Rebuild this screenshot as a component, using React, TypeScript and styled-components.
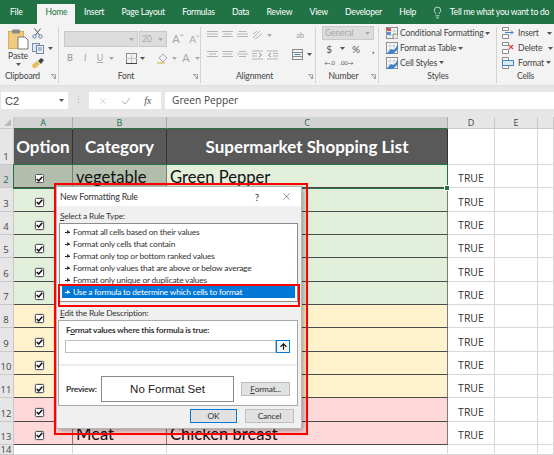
import React from 'react';
import styled, { createGlobalStyle } from 'styled-components';
import { ArrowUp, Lightbulb, X } from 'lucide-react';

const ui = 'Lato, "Open Sans", sans-serif';
const sheet = 'Lato, "Open Sans", sans-serif';

const Global = createGlobalStyle`
  html, body { margin: 0; padding: 0; background: #fff; }
  body { font-family: ${ui}; }
`;

// small ribbon drawings
const Caret = ({ c = '#555' }: { c?: string }) => (
  <svg width="5" height="3" viewBox="0 0 5 3"><path d="M0 0h5L2.5 3z" fill={c} /></svg>
);

const PasteIcon = () => (
  <svg width="21" height="21" viewBox="0 0 21 21">
    <rect x="0.5" y="2.5" width="15" height="17" fill="#eecb7e" stroke="#d9ad58" />
    <rect x="4" y="0.5" width="8" height="4" rx="1" fill="#8a8a8a" />
    <path d="M10 8h7l3 3v9H10z" fill="#fff" stroke="#777" />
  </svg>
);
const ScissorsIcon = () => (
  <svg width="11" height="11" viewBox="0 0 11 11" fill="none" stroke="#5a7ea8" strokeWidth="1">
    <circle cx="2.5" cy="8.5" r="1.7" />
    <circle cx="8.5" cy="8.5" r="1.7" />
    <path d="M3.5 7 8.5 0.5M7.5 7 2.5 0.5" stroke="#555" />
  </svg>
);
const CopyIcon = () => (
  <svg width="12" height="11" viewBox="0 0 12 11">
    <rect x="0.5" y="0.5" width="7" height="8" fill="#dfe8f2" stroke="#7c93ad" />
    <rect x="4.5" y="2.5" width="7" height="8" fill="#eef3f8" stroke="#6d87a5" />
    <path d="M6 5h4M6 7h4" stroke="#6d87a5" />
  </svg>
);
const BrushIcon = () => (
  <svg width="12" height="10" viewBox="0 0 12 10">
    <path d="M0 7 5 3l3 3-4 4H1z" fill="#e8bd62" />
    <path d="M6 3l3-3 3 2-3 4z" fill="#444" />
  </svg>
);
const Lines = ({ widths }: { widths: number[] }) => (
  <svg width="11" height="10" viewBox="0 0 11 10" stroke="#b5b5b5">
    {widths.map((w, i) => (
      <path key={i} d={`M${(11 - w) / 2} ${1.5 + i * 2.5}h${w}`} />
    ))}
  </svg>
);
const OrientIcon = () => (
  <svg width="11" height="10" viewBox="0 0 11 10" fill="none" stroke="#b5b5b5">
    <path d="M1 8 8 1M3 9l7-5M1 4l4-3" />
  </svg>
);
const IndentIcon = ({ flip }: { flip?: boolean }) => (
  <svg width="11" height="10" viewBox="0 0 11 10" stroke="#b5b5b5" fill="none" style={flip ? { transform: 'scaleX(-1)' } : undefined}>
    <path d="M0 1h11M6 3.5h5M6 6h5M0 9h11" />
    <path d="M4 3 1.5 5 4 7" stroke="#8b8b8b" />
  </svg>
);
const BorderIcon = () => (
  <svg width="11" height="11" viewBox="0 0 11 11" fill="none" stroke="#8a8a8a">
    <rect x="0.5" y="0.5" width="10" height="10" />
    <path d="M5.5 0v11M0 5.5h11" stroke="#c4c4c4" />
    <path d="M0 10.5h11" stroke="#444" />
  </svg>
);
const FillIcon = () => (
  <svg width="12" height="12" viewBox="0 0 12 12" fill="none" stroke="#a8a8a8">
    <path d="M2 6 6 2l4 4-4 4z" />
    <path d="M0 11h8" stroke="#e2cf9a" strokeWidth="2" />
  </svg>
);
const MergeIcon = () => (
  <svg width="11" height="11" viewBox="0 0 11 11" fill="none" stroke="#8a8a8a">
    <rect x="0.5" y="0.5" width="10" height="10" />
    <path d="M0 3.5h11M0 7.5h11" />
    <path d="M2.5 5.5h6" stroke="#4d86c6" />
  </svg>
);
const RuleTableIcon = ({ tone }: { tone: 'cond' | 'table' | 'styles' }) => (
  <svg width="12" height="12" viewBox="0 0 12 12">
    <rect x="0.5" y="0.5" width="11" height="11" fill="#fff" stroke="#8a8a8a" />
    <path d="M0 4h12M0 8h12M4 0v12M8 0v12" stroke="#b8b8b8" strokeWidth="0.7" />
    {tone === 'cond' && <path d="M1 1h4v3H1z" fill="#d9534a" />}
    {tone === 'cond' && <path d="M1 5h4v3H1z" fill="#5b8fd0" />}
    {tone === 'cond' && <path d="M7 7h5v5H7z" fill="#e9e9e9" stroke="#666" strokeWidth="0.7" />}
    {tone !== 'cond' && <path d="M0 12 5 7l3 1 4-5v4L7 12z" fill="#3d83c8" />}
  </svg>
);
const CellsIcon = ({ kind }: { kind: 'insert' | 'delete' | 'format' }) => (
  <svg width="12" height="12" viewBox="0 0 12 12" fill="none">
    <path d="M0.5 0.5h6v3h-6zM0.5 7.5h6v4h-6z" stroke="#8a8a8a" fill="#fff" />
    {kind === 'insert' && <path d="M3 5.5h8M9 3.5l2 2-2 2" stroke="#3d83c8" />}
    {kind === 'delete' && <path d="M7 3l4 4M11 3 7 7" stroke="#d9443a" strokeWidth="1.2" />}
    {kind === 'format' && <path d="M0.5 3.5h11v5h-11z" stroke="#3d83c8" fill="#dce8f4" />}
  </svg>
);
const CheckIcon = () => (
  <svg width="7" height="6" viewBox="0 0 7 6" fill="none" stroke="#111" strokeWidth="1.5">
    <path d="M0.7 3 2.7 5 6.3 0.8" />
  </svg>
);
const Launcher = () => (
  <svg width="5" height="5" viewBox="0 0 5 5" fill="none" stroke="#8d8d8d" strokeWidth="0.8">
    <path d="M0 .4h4.6V5M1 1l3 3M2.5 4.2H4.2V2.5" />
  </svg>
);

// page
const Page = styled.div`
  position: relative;
  width: 554px;
  height: 455px;
  overflow: hidden;
  display: flex;
  flex-direction: column;
  background: #e6e6e6;
`;

const TabBar = styled.nav`
  height: 24px;
  flex: none;
  background: #217346;
  display: flex;
  align-items: stretch;
  font-size: 8.6px;
  letter-spacing: -0.25px;
  color: #fff;
  white-space: nowrap;
`;
const Tab = styled.div<{ $active?: boolean; $lead?: boolean }>`
  display: flex;
  align-items: center;
  padding: 0 ${p => (p.$active ? 8 : 8.7)}px;
  ${p => p.$lead && 'padding: 0 15px 0 10px;'}
  ${p => p.$active && 'background: #f3f3f3; color: #217346; margin: 4px 0 0; padding-bottom: 4px;'}
`;
const TellMe = styled.div`
  display: flex;
  align-items: center;
  gap: 6px;
  margin-left: 6px;
`;

const Ribbon = styled.div`
  height: 61px;
  flex: none;
  background: #f3f3f3;
  display: flex;
  font-size: 8.6px;
  letter-spacing: -0.15px;
  color: #444;
`;
const Group = styled.section<{ $w: number; $edge?: boolean }>`
  position: relative;
  width: ${p => p.$w}px;
  flex: none;
  display: flex;
  flex-direction: column;
  &::after {
    content: '';
    position: absolute;
    right: 0;
    top: 3px;
    bottom: 2px;
    width: ${p => (p.$edge ? 0 : 1)}px;
    background: #d4d4d4;
  }
`;
const GroupBody = styled.div`
  flex: 1;
  min-height: 0;
  display: flex;
`;
const GroupLabel = styled.div<{ $inset?: number }>`
  position: relative;
  height: 15px;
  flex: none;
  box-sizing: border-box;
  padding-right: ${p => p.$inset ?? 0}px;
  line-height: 13px;
  text-align: center;
  color: #444;
  white-space: nowrap;
`;
const LauncherSlot = styled.span`
  position: absolute;
  right: 3px;
  top: 4px;
  display: flex;
`;
const PasteCol = styled.div`
  width: 30px;
  margin-left: 3px;
  display: flex;
  flex-direction: column;
  align-items: center;
  padding-top: 5px;
  line-height: 11px;
  gap: 1px;
`;
const ClipCol = styled.div`
  display: flex;
  flex-direction: column;
  gap: 4px;
  padding-top: 4px;
  margin-left: -1px;
`;
const Stack = styled.div<{ $gap?: number; $top?: number; $left?: number }>`
  display: flex;
  flex-direction: column;
  gap: ${p => p.$gap ?? 4}px;
  padding-top: ${p => p.$top ?? 4}px;
  padding-left: ${p => p.$left ?? 0}px;
`;
const Row = styled.div<{ $gap?: number; $h?: number; $pad?: number }>`
  display: flex;
  align-items: center;
  gap: ${p => p.$gap ?? 3}px;
  height: ${p => (p.$h ? `${p.$h}px` : 'auto')};
  padding-left: ${p => p.$pad ?? 0}px;
`;
const Combo = styled.div<{ $w: number; $h?: number }>`
  width: ${p => p.$w}px;
  height: ${p => p.$h ?? 15}px;
  box-sizing: border-box;
  border: 1px solid #c9c9c9;
  background: #dcdcdc;
  color: #aaa;
  display: flex;
  align-items: center;
  justify-content: space-between;
  padding: 0 3px 0 2px;
`;
const Glyph = styled.span<{ $w?: number; $dark?: boolean; $bold?: boolean; $size?: number }>`
  width: ${p => p.$w ?? 12}px;
  text-align: center;
  color: ${p => (p.$dark ? '#555' : '#a5a5a5')};
  font-weight: ${p => (p.$bold ? 700 : 400)};
  font-size: ${p => p.$size ?? 9}px;
  line-height: 12px;
  flex: none;
`;
const Spacer = styled.span<{ $w: number }>`
  width: ${p => p.$w}px;
  flex: none;
`;
const StyleRow = styled.div`
  display: flex;
  align-items: center;
  gap: 2px;
  height: 15px;
  white-space: nowrap;
`;

const Shadow = styled.div`
  height: 6px;
  flex: none;
  box-sizing: border-box;
  background: #e6e6e6;
  border-top: 1px solid #dedede;
`;
const FormulaBar = styled.div`
  height: 19px;
  flex: none;
  display: flex;
  align-items: stretch;
  background: #e6e6e6;
  padding: 1px 0;
  box-sizing: border-box;
  font-size: 11px;
  color: #444;
`;
const NameBox = styled.div`
  width: 67px;
  margin-left: 1px;
  background: #fff;
  display: flex;
  align-items: center;
  justify-content: space-between;
  padding: 0 4px;
  box-sizing: border-box;
  font-family: "Liberation Sans", sans-serif;
`;
const Grip = styled.div`
  width: 21px;
  text-align: center;
  color: #aaa;
  font-size: 9px;
  line-height: 15px;
`;
const FxBox = styled.div`
  width: 72px;
  background: #fff;
  display: flex;
  align-items: center;
  justify-content: space-around;
  color: #b0b0b0;
  font-size: 10px;
  padding: 0 3px;
  box-sizing: border-box;
`;
const FxLabel = styled.i`
  font-family: "Liberation Serif", serif;
  color: #555;
`;
const FormulaInput = styled.div`
  flex: 1;
  margin-left: 4px;
  background: #fff;
  padding-left: 7px;
  line-height: 17px;
  font-family: "Open Sans", sans-serif;
  font-size: 10.2px;
`;
const Gap = styled.div`
  height: 7px;
  flex: none;
  background: #e6e6e6;
`;

// sheet
const Sheet = styled.div`
  position: relative;
  flex: 1;
  min-height: 0;
  background: #fff;
  display: grid;
  grid-template-columns: 14px 59px 94px 281px 47px 43px 16px;
  grid-template-rows: 12px 36px repeat(12, 23.33px) 1fr;
  font-family: ${sheet};
`;
const Corner = styled.div`
  background: #e6e6e6;
  border-right: 1px solid #c8c8c8;
  border-bottom: 1px solid #c8c8c8;
  display: flex;
  align-items: flex-end;
  justify-content: flex-end;
  &::after {
    content: '';
    border-style: solid;
    border-width: 0 0 7px 7px;
    border-color: transparent transparent #b9b9b9 transparent;
    margin: 0 2px 2px 0;
  }
`;
const ColHead = styled.div<{ $sel?: boolean }>`
  background: ${p => (p.$sel ? '#d2d2d2' : '#e6e6e6')};
  color: ${p => (p.$sel ? '#217346' : '#444')};
  border-right: 1px solid ${p => (p.$sel ? '#ababab' : '#c8c8c8')};
  border-bottom: 1px solid ${p => (p.$sel ? '#217346' : '#c8c8c8')};
  font: 9px/11px "Open Sans", sans-serif;
  text-align: center;
  box-sizing: border-box;
`;
const RowHead = styled.div<{ $sel?: boolean; $cut?: boolean }>`
  background: ${p => (p.$sel ? '#d2d2d2' : '#e6e6e6')};
  color: ${p => (p.$sel ? '#217346' : '#444')};
  border-right: 1px solid ${p => (p.$sel ? '#217346' : '#c8c8c8')};
  border-bottom: 1px solid #c8c8c8;
  font: 9.5px/${p => (p.$cut ? 10 : 12)}px "Open Sans", sans-serif;
  display: flex;
  align-items: ${p => (p.$cut ? 'flex-start' : 'flex-end')};
  justify-content: center;
  padding: 0 1px ${p => (p.$cut ? 0 : 1)}px 0;
  box-sizing: border-box;
  overflow: hidden;
`;
const HeadCell = styled.div`
  background: #595959;
  color: #fff;
  font-weight: 700;
  font-size: 17px;
  display: flex;
  align-items: center;
  justify-content: center;
  border-right: 1px solid #333;
  border-bottom: 1px solid #333;
  box-sizing: border-box;
  white-space: nowrap;
  overflow: hidden;
`;
const tones: Record<string, string> = { green: '#e2efda', yellow: '#fff2cc', red: '#ffd9d9' };
const DataCell = styled.div<{ $tone: string; $sel?: boolean }>`
  background: ${p => (p.$sel ? '#b3bdab' : tones[p.$tone])};
  color: #111;
  font-size: 16.6px;
  line-height: 20px;
  border-right: 1px solid #7b7b7b;
  border-bottom: 1px solid #4a4a4a;
  box-sizing: border-box;
  padding-left: 3px;
  display: flex;
  align-items: flex-end;
  white-space: nowrap;
  overflow: hidden;
`;
const CheckCell = styled(DataCell)`
  align-items: flex-end;
  justify-content: center;
  padding: 0 8px 4px 0;
`;
const CheckBox = styled.span`
  width: 9px;
  height: 9px;
  box-sizing: border-box;
  border: 1px solid #555;
  border-radius: 1.5px;
  background: #fff;
  display: flex;
  align-items: center;
  justify-content: center;
  box-shadow: 0 0 0 0.5px #bbb;
`;
const PlainCell = styled.div`
  border-right: 1px solid #d8d8d8;
  border-bottom: 1px solid #d8d8d8;
  box-sizing: border-box;
  font-family: "Open Sans", sans-serif;
  font-size: 10.5px;
  color: #333;
  display: flex;
  align-items: flex-end;
  justify-content: center;
  padding-bottom: 2px;
`;
const Selection = styled.div`
  position: absolute;
  left: 13px;
  top: 47px;
  width: 435px;
  height: 25px;
  box-sizing: border-box;
  border: 1.5px solid #217346;
  pointer-events: none;
  &::after {
    content: '';
    position: absolute;
    right: -3px;
    bottom: -3px;
    width: 4px;
    height: 4px;
    background: #217346;
    border: 0.5px solid #fff;
  }
`;

// dialog
const Dialog = styled.div`
  position: absolute;
  left: 56px;
  top: 186px;
  width: 246px;
  height: 243px;
  box-sizing: border-box;
  background: #f0f0f0;
  box-shadow: 2px 2px 6px rgba(0, 0, 0, 0.35);
  border: 1px solid #b5b5b5;
  font-size: 8.4px;
  letter-spacing: -0.2px;
  color: #333;
  display: flex;
  flex-direction: column;
`;
const TitleBar = styled.div`
  height: 19px;
  background: #fff;
  display: flex;
  align-items: center;
  padding: 0 9px 0 3px;
  flex: none;
  font-size: 8.8px;
`;
const Title = styled.div`
  flex: 1;
`;
const TitleBtn = styled.span`
  margin-right: 22px;
  font-size: 10px;
`;
const SectionLabel = styled.div<{ $top: number }>`
  margin: ${p => p.$top}px 0 0 3px;
  line-height: 11px;
  height: 11px;
  flex: none;
`;
const RuleList = styled.div`
  margin: 1px 3px 0 2px;
  height: 79px;
  box-sizing: border-box;
  border: 1px solid #8c8c8c;
  background: #fff;
  padding: 2px;
  flex: none;
`;
const RuleRow = styled.div<{ $sel?: boolean }>`
  height: 12px;
  line-height: 11px;
  padding-left: 3px;
  white-space: nowrap;
  display: flex;
  align-items: center;
  gap: 3px;
  background: ${p => (p.$sel ? '#0078d7' : 'transparent')};
  color: ${p => (p.$sel ? '#fff' : '#333')};
`;
const Bullet = styled.span`
  width: 5px;
  height: 0;
  border-top: 1px solid currentColor;
  position: relative;
  &::after {
    content: '';
    position: absolute;
    right: 0;
    top: -2.5px;
    border-left: 3px solid currentColor;
    border-top: 2px solid transparent;
    border-bottom: 2px solid transparent;
  }
`;
const DescBox = styled.div`
  margin: 1px 3px 0 1px;
  height: 86px;
  flex: none;
  box-sizing: border-box;
  border: 1px solid #a8a8a8;
  background: #fff;
  display: flex;
  flex-direction: column;
`;
const BoldLabel = styled.div`
  font-weight: 700;
  color: #333;
  margin: 4px 0 0 7px;
  line-height: 11px;
  height: 11px;
`;
const FormulaRow = styled.div`
  display: flex;
  margin: 4px 7px 0 6px;
  height: 13px;
`;
const FormulaField = styled.div`
  flex: 1;
  box-sizing: border-box;
  border: 1px solid #bdbdbd;
  background: #fff;
`;
const RefBtn = styled.div`
  width: 14px;
  box-sizing: border-box;
  border: 1px solid #0078d7;
  background: #f4f4f4;
  display: flex;
  align-items: center;
  justify-content: center;
`;
const Divider = styled.div`
  margin-top: 11px;
  height: 2px;
  background: #ececec;
`;
const PreviewRow = styled.div`
  display: flex;
  align-items: center;
  margin: 10px 7px 0 7px;
`;
const PreviewLabel = styled.div`
  width: 35px;
  font-weight: 700;
  flex: none;
`;
const PreviewBox = styled.div`
  width: 133px;
  height: 26px;
  flex: none;
  box-sizing: border-box;
  border: 1px solid #8a8a8a;
  display: flex;
  align-items: center;
  justify-content: center;
  font: 11.5px "Liberation Sans", sans-serif;
  letter-spacing: 0;
  color: #222;
`;
const DlgButton = styled.div<{ $w: number; $primary?: boolean }>`
  width: ${p => p.$w}px;
  height: 14px;
  box-sizing: border-box;
  border: 1px solid ${p => (p.$primary ? '#0078d7' : '#bfbfbf')};
  background: #e1e1e1;
  display: flex;
  align-items: center;
  justify-content: center;
  flex: none;
`;
const FormatBtn = styled(DlgButton)`
  margin-left: 7px;
`;
const Footer = styled.div`
  display: flex;
  justify-content: flex-end;
  gap: 8px;
  margin: 3px 7px 0 0;
`;

// annotations
const RedFrame = styled.div<{ $l: number; $t: number; $w: number; $h: number }>`
  position: absolute;
  left: ${p => p.$l}px;
  top: ${p => p.$t}px;
  width: ${p => p.$w}px;
  height: ${p => p.$h}px;
  box-sizing: border-box;
  border: 2px solid #ff0000;
  pointer-events: none;
`;

const tabs = ['Insert', 'Page Layout', 'Formulas', 'Data', 'Review', 'View', 'Developer', 'Help'];
const rows: { n: number; tone: string; b?: string; c?: string }[] = [
  { n: 2, tone: 'green', b: 'vegetable', c: 'Green Pepper' },
  { n: 3, tone: 'green' },
  { n: 4, tone: 'green' },
  { n: 5, tone: 'green' },
  { n: 6, tone: 'green' },
  { n: 7, tone: 'green' },
  { n: 8, tone: 'yellow' },
  { n: 9, tone: 'yellow' },
  { n: 10, tone: 'yellow' },
  { n: 11, tone: 'yellow' },
  { n: 12, tone: 'red' },
  { n: 13, tone: 'red', b: 'Meat', c: 'Chicken breast' },
];
const rules = [
  'Format all cells based on their values',
  'Format only cells that contain',
  'Format only top or bottom ranked values',
  'Format only values that are above or below average',
  'Format only unique or duplicate values',
];

const App = () => {
  return (
    <Page>
      <Global />
      <TabBar>
        <Tab $lead>File</Tab>
        <Tab $active>Home</Tab>
        {tabs.map(t => (
          <Tab key={t}>{t}</Tab>
        ))}
        <TellMe>
          <Lightbulb size={13} strokeWidth={1.3} />
          Tell me what you want to do
        </TellMe>
      </TabBar>

      <Ribbon>
        <Group $w={59}>
          <GroupBody>
            <PasteCol>
              <PasteIcon />
              <span>Paste</span>
              <Caret />
            </PasteCol>
            <ClipCol>
              <ScissorsIcon />
              <Row $gap={4}><CopyIcon /><Caret /></Row>
              <BrushIcon />
            </ClipCol>
          </GroupBody>
          <GroupLabel $inset={14}>Clipboard<LauncherSlot><Launcher /></LauncherSlot></GroupLabel>
        </Group>

        <Group $w={142}>
          <GroupBody>
            <Stack $top={7} $gap={5} $left={5}>
              <Row $gap={1}>
                <Combo $w={74} $h={16}><span /><Caret c="#aaa" /></Combo>
                <Combo $w={28} $h={16}>20<Caret c="#aaa" /></Combo>
                <Glyph $w={16} $size={11} style={{ marginLeft: 2 }}>Aˆ</Glyph>
                <Glyph $w={15} $size={10}>Aˇ</Glyph>
              </Row>
              <Row $gap={3}>
                <Glyph $bold>B</Glyph>
                <Glyph style={{ fontStyle: 'italic' }}>I</Glyph>
                <Glyph style={{ textDecoration: 'underline' }}>U</Glyph>
                <Caret c="#aaa" />
                <Spacer $w={6} />
                <BorderIcon />
                <Caret c="#555" />
                <Spacer $w={6} />
                <FillIcon />
                <Caret c="#aaa" />
                <Glyph $size={11}>A</Glyph>
                <Caret c="#aaa" />
              </Row>
            </Stack>
          </GroupBody>
          <GroupLabel $inset={8}>Font<LauncherSlot><Launcher /></LauncherSlot></GroupLabel>
        </Group>

        <Group $w={115}>
          <GroupBody>
            <Stack $top={5} $gap={8} $left={6}>
              <Row $gap={4}>
                <Lines widths={[11, 11, 11]} />
                <Lines widths={[11, 8, 11]} />
                <Lines widths={[8, 11, 11]} />
                <OrientIcon />
                <Caret c="#aaa" />
                <Spacer $w={13} />
                <Glyph $w={14} $size={8}>ab</Glyph>
              </Row>
              <Row $gap={4}>
                <Lines widths={[11, 7, 11]} />
                <Lines widths={[11, 9, 11]} />
                <Lines widths={[7, 11, 7]} />
                <IndentIcon flip />
                <IndentIcon />
                <Spacer $w={6} />
                <MergeIcon />
                <Caret />
              </Row>
            </Stack>
          </GroupBody>
          <GroupLabel $inset={8}>Alignment<LauncherSlot><Launcher /></LauncherSlot></GroupLabel>
        </Group>

        <Group $w={63}>
          <GroupBody>
            <Stack $top={2} $gap={1} $left={6}>
              <Combo $w={52} $h={15}>General<Caret c="#aaa" /></Combo>
              <Row $h={15} $gap={4}>
                <Glyph $dark $w={14} $size={10}>$</Glyph>
                <Caret />
                <Glyph $dark $w={14} $size={10}>%</Glyph>
                <Glyph $dark $w={12} $size={10} $bold>,</Glyph>
              </Row>
              <Row $h={14} $gap={2}>
                <Glyph $dark $w={15} $size={6}>←.0</Glyph>
                <Glyph $dark $w={15} $size={6}>.00→</Glyph>
              </Row>
            </Stack>
          </GroupBody>
          <GroupLabel $inset={8}>Number<LauncherSlot><Launcher /></LauncherSlot></GroupLabel>
        </Group>

        <Group $w={118}>
          <GroupBody>
            <Stack $top={2} $gap={0} $left={7}>
              <StyleRow><RuleTableIcon tone="cond" />Conditional Formatting <Caret /></StyleRow>
              <StyleRow><RuleTableIcon tone="table" />Format as Table <Caret /></StyleRow>
              <StyleRow><RuleTableIcon tone="styles" />Cell Styles <Caret /></StyleRow>
            </Stack>
          </GroupBody>
          <GroupLabel>Styles</GroupLabel>
        </Group>

        <Group $w={57} $edge>
          <GroupBody>
            <Stack $top={2} $gap={0} $left={5}>
              <StyleRow><CellsIcon kind="insert" />&nbsp;Insert&nbsp;&nbsp;&nbsp;<Caret /></StyleRow>
              <StyleRow><CellsIcon kind="delete" />&nbsp;Delete&nbsp;&nbsp;<Caret /></StyleRow>
              <StyleRow><CellsIcon kind="format" />&nbsp;Format <Caret /></StyleRow>
            </Stack>
          </GroupBody>
          <GroupLabel>Cells</GroupLabel>
        </Group>
      </Ribbon>

      <Shadow />

      <FormulaBar>
        <NameBox>C2<Caret /></NameBox>
        <Grip>⋮</Grip>
        <FxBox>
          <X size={10} strokeWidth={1.2} />
          <svg width="10" height="8" viewBox="0 0 10 8" fill="none" stroke="#b0b0b0"><path d="M1 4l3 3 5-6" /></svg>
          <FxLabel>fx</FxLabel>
        </FxBox>
        <FormulaInput>Green Pepper</FormulaInput>
      </FormulaBar>
      <Gap />

      <Sheet>
        <Corner />
        <ColHead $sel>A</ColHead>
        <ColHead $sel>B</ColHead>
        <ColHead $sel>C</ColHead>
        <ColHead>D</ColHead>
        <ColHead>E</ColHead>
        <ColHead />

        <RowHead>1</RowHead>
        <HeadCell>Option</HeadCell>
        <HeadCell>Category</HeadCell>
        <HeadCell>Supermarket Shopping List</HeadCell>
        <PlainCell />
        <PlainCell />
        <PlainCell />

        {rows.map(r => {
          const sel = r.n === 2;
          return (
            <React.Fragment key={r.n}>
              <RowHead $sel={sel}>{r.n}</RowHead>
              <CheckCell $tone={r.tone} $sel={sel}>
                <CheckBox><CheckIcon /></CheckBox>
              </CheckCell>
              <DataCell $tone={r.tone} $sel={sel}>{r.b}</DataCell>
              <DataCell $tone={r.tone}>{r.c}</DataCell>
              <PlainCell>TRUE</PlainCell>
              <PlainCell />
              <PlainCell />
            </React.Fragment>
          );
        })}

        <RowHead $cut>14</RowHead>
        <PlainCell />
        <PlainCell />
        <PlainCell />
        <PlainCell />
        <PlainCell />
        <PlainCell />

        <Selection />
      </Sheet>

      <Dialog>
        <TitleBar>
          <Title>New Formatting Rule</Title>
          <TitleBtn>?</TitleBtn>
          <X size={11} strokeWidth={1.2} />
        </TitleBar>
        <SectionLabel $top={5}><u>S</u>elect a Rule Type:</SectionLabel>
        <RuleList>
          {rules.map(r => (
            <RuleRow key={r}><Bullet />{r}</RuleRow>
          ))}
          <RuleRow $sel><Bullet />Use a formula to determine which cells to format</RuleRow>
        </RuleList>
        <SectionLabel $top={6}><u>E</u>dit the Rule Description:</SectionLabel>
        <DescBox>
          <BoldLabel>F<u>o</u>rmat values where this formula is true:</BoldLabel>
          <FormulaRow>
            <FormulaField />
            <RefBtn><ArrowUp size={9} strokeWidth={3} color="#111" /></RefBtn>
          </FormulaRow>
          <Divider />
          <PreviewRow>
            <PreviewLabel>Preview:</PreviewLabel>
            <PreviewBox>No Format Set</PreviewBox>
            <FormatBtn $w={49}><u>F</u>ormat...</FormatBtn>
          </PreviewRow>
        </DescBox>
        <Footer>
          <DlgButton $w={47} $primary>OK</DlgButton>
          <DlgButton $w={49}>Cancel</DlgButton>
        </Footer>
      </Dialog>

      <RedFrame $l={54} $t={183} $w={254} $h={252} />
      <RedFrame $l={58} $t={284} $w={242} $h={23} />
    </Page>
  );
};

export default App;
